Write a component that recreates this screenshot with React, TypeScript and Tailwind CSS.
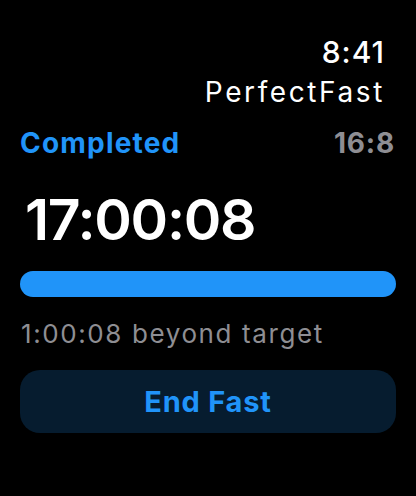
import React from "react";

export default function App() {
  return (
    <div
      className="w-[416px] h-[496px] bg-black text-white flex flex-col"
      style={{ fontFamily: "Inter, 'Noto Sans', sans-serif" }}
    >
      <div className="flex flex-col items-end pr-[31px] pt-[37px]">
        <div className="text-[30px] leading-[30px] font-medium tracking-[1px]">8:41</div>
        <div className="text-[28px] leading-[28px] mt-[11px] tracking-[2.6px]">PerfectFast</div>
      </div>
      <div className="flex items-center justify-between pl-[20px] pr-[21px] mt-[23px]">
        <div className="text-[28px] leading-[28px] font-bold tracking-[1.2px] text-[#2094f9]">Completed</div>
        <div className="text-[28px] leading-[28px] font-bold tracking-[0.8px] text-[#8e8e93]">16:8</div>
      </div>
      <div className="pl-[25px] mt-[34px] text-[57px] leading-[57px] font-semibold tracking-[-1.3px]">17:00:08</div>
      <div className="px-[20px] mt-[23px]">
        <div className="h-[26px] rounded-full bg-[#2094f9]" />
      </div>
      <div className="pl-[21px] mt-[24px] text-[26px] leading-[26px] tracking-[1.6px] text-[#8e8e93]">
        1:00:08 beyond target
      </div>
      <div className="px-[20px] mt-[23px]">
        <div className="h-[63px] rounded-[20px] bg-[#061c2f] flex items-center justify-center text-[29px] font-bold tracking-[0.8px] text-[#2094f9]">
          End Fast
        </div>
      </div>
    </div>
  );
}
